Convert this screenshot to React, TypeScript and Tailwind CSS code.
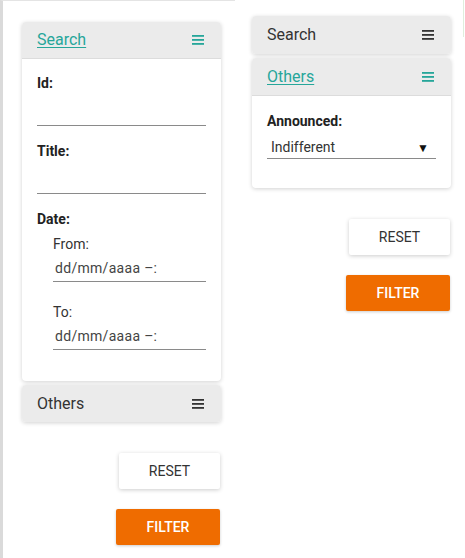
import React from "react";

const FONT = { fontFamily: "Roboto, 'Noto Sans', sans-serif" };

function MenuIcon({ active }: { active: boolean }) {
  const color = active ? "#26a69a" : "#333333";
  return (
    <svg width="12" height="10" viewBox="0 0 12 10" fill={color}>
      <rect x="0" y="0" width="12" height="1.8" />
      <rect x="0" y="4" width="12" height="1.8" />
      <rect x="0" y="8" width="12" height="1.8" />
    </svg>
  );
}

function Header({ title, active, tall }: { title: string; active: boolean; tall?: boolean }) {
  return (
    <div
      className={`flex items-center justify-between bg-[#ebebeb] pl-[15px] pr-[17px] ${
        tall ? "h-[38px]" : "h-[37px]"
      } ${active ? "border-b border-[#dcdcdc]" : ""}`}
    >
      <span
        className={`text-[16px] leading-5 ${
          active ? "text-[#26a69a] underline underline-offset-2" : "text-[#333333]"
        }`}
      >
        {title}
      </span>
      <MenuIcon active={active} />
    </div>
  );
}

function Card({ children }: { children: React.ReactNode }) {
  return (
    <div className="w-[199px] overflow-hidden rounded-[4px] bg-white shadow-[0_1px_4px_rgba(0,0,0,0.18)]">
      {children}
    </div>
  );
}

function Label({ children }: { children: React.ReactNode }) {
  return <div className="h-5 text-[14px] font-bold leading-5 text-[#222222]">{children}</div>;
}

function TextField({ label }: { label: string }) {
  return (
    <div className="mb-[15px]">
      <Label>{label}</Label>
      <div className="h-[33px] border-b border-[#8a8a8a]" />
    </div>
  );
}

function DateField({ label }: { label: string }) {
  return (
    <div>
      <div className="h-5 text-[14px] leading-5 text-[#333333]">{label}</div>
      <div className="flex h-[28px] items-end border-b border-[#8a8a8a] pb-[3px] pl-[2px] text-[14px] leading-5 tracking-[0.3px] text-[#444444]">
        dd/mm/aaaa –:
      </div>
    </div>
  );
}

function Buttons() {
  return (
    <div className="mt-[31px] flex w-[199px] flex-col items-end gap-5">
      <button className="mr-[1px] h-9 w-[101px] rounded-[2px] bg-white text-[14px] text-[#333333] shadow-[0_1px_4px_rgba(0,0,0,0.2)]">
        RESET
      </button>
      <button className="mr-[1px] h-9 w-[104px] rounded-[2px] bg-[#ef6c00] text-[14px] font-medium text-white shadow-[0_1px_3px_rgba(0,0,0,0.2)]">
        FILTER
      </button>
    </div>
  );
}

export default function App() {
  return (
    <div className="flex h-[558px] w-[465px] bg-white" style={FONT}>
      {/* Left: search expanded */}
      <div className="h-full w-[235px] border-l-[3px] border-t border-l-[#dadada] border-t-[#e4e4e4] pl-[19px] pt-[21px]">
        <Card>
          <Header title="Search" active />
          <div className="px-[15px] pb-[31px] pt-[14px]">
            <TextField label="Id:" />
            <TextField label="Title:" />
            <Label>Date:</Label>
            <div className="mt-[5px] pl-4">
              <DateField label="From:" />
              <div className="h-5" />
              <DateField label="To:" />
            </div>
          </div>
        </Card>
        <div className="mt-1">
          <Card>
            <Header title="Others" active={false} />
          </Card>
        </div>
        <Buttons />
      </div>

      {/* Right: others expanded */}
      <div className="flex flex-1">
        <div className="flex-1 pl-[17px] pt-[16px]">
          <Card>
            <Header title="Search" active={false} tall />
          </Card>
          <div className="mt-1">
            <Card>
              <Header title="Others" active tall />
              <div className="px-[15px] pb-[29px] pt-[15px]">
                <Label>Announced:</Label>
                <div className="flex h-[28px] items-end justify-between border-b border-[#8a8a8a] pb-[1px] pl-1 pr-[7px] text-[14px] leading-5 text-[#333333]">
                  <span>Indifferent</span>
                  <span className="pb-[3px] text-[12px] leading-none text-[#111111]">▼</span>
                </div>
              </div>
            </Card>
          </div>
          <Buttons />
        </div>
        <div className="mr-[1px] h-[37px] w-px bg-[#dfeedd]" />
      </div>
    </div>
  );
}
